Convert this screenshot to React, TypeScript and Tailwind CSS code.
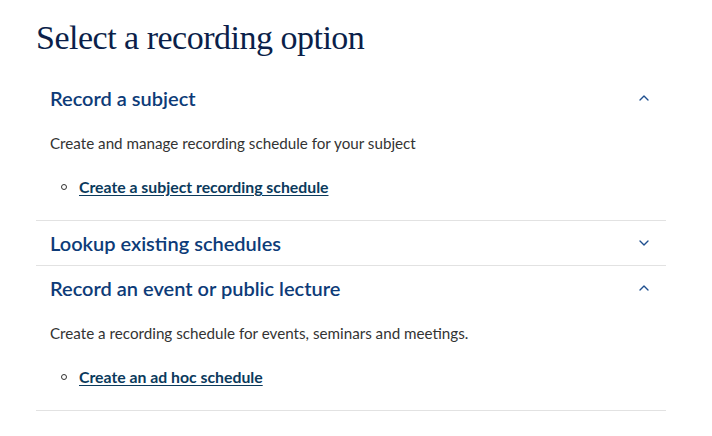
import { ChevronDown, ChevronUp } from "lucide-react";

type Section = {
  title: string;
  open: boolean;
  description?: string;
  link?: string;
};

const sections: Section[] = [
  {
    title: "Record a subject",
    open: true,
    description: "Create and manage recording schedule for your subject",
    link: "Create a subject recording schedule",
  },
  { title: "Lookup existing schedules", open: false },
  {
    title: "Record an event or public lecture",
    open: true,
    description: "Create a recording schedule for events, seminars and meetings.",
    link: "Create an ad hoc schedule",
  },
];

export default function App() {
  return (
    <div className="min-h-screen bg-white px-9 pt-[18px] font-['Lato',sans-serif]">
      <h1 className="font-['Liberation_Serif',serif] text-[34px] leading-[40px] tracking-[-0.5px] text-[#0b1f4a]">
        Select a recording option
      </h1>

      <div className="mt-[18px] w-[630px]">
        {sections.map((s) => (
          <div key={s.title} className="border-b border-[#e2e2e2]">
            <button className="flex h-[44px] w-full items-center justify-between px-[14px] text-left">
              <span className="text-[20px] font-semibold text-[#0d3b78]">{s.title}</span>
              <span className="text-[#1f4f8f]">
                {s.open ? <ChevronUp size={16} strokeWidth={2} /> : <ChevronDown size={16} strokeWidth={2} />}
              </span>
            </button>
            {s.open && (
              <div className="px-[14px] pb-[22px] pt-[12px]">
                <p className="text-[15.2px] leading-[22px] text-[#333333]">{s.description}</p>
                <ul className="mt-[22px] pl-[11px]">
                  <li className="flex items-center gap-[12px] leading-[22px]">
                    <span className="h-[6px] w-[6px] rounded-full border-[1.5px] border-[#333]" />
                    <a href="#" className="text-[15.8px] font-bold text-[#0b3a5c] underline underline-offset-2">
                      {s.link}
                    </a>
                  </li>
                </ul>
              </div>
            )}
          </div>
        ))}
      </div>
    </div>
  );
}
